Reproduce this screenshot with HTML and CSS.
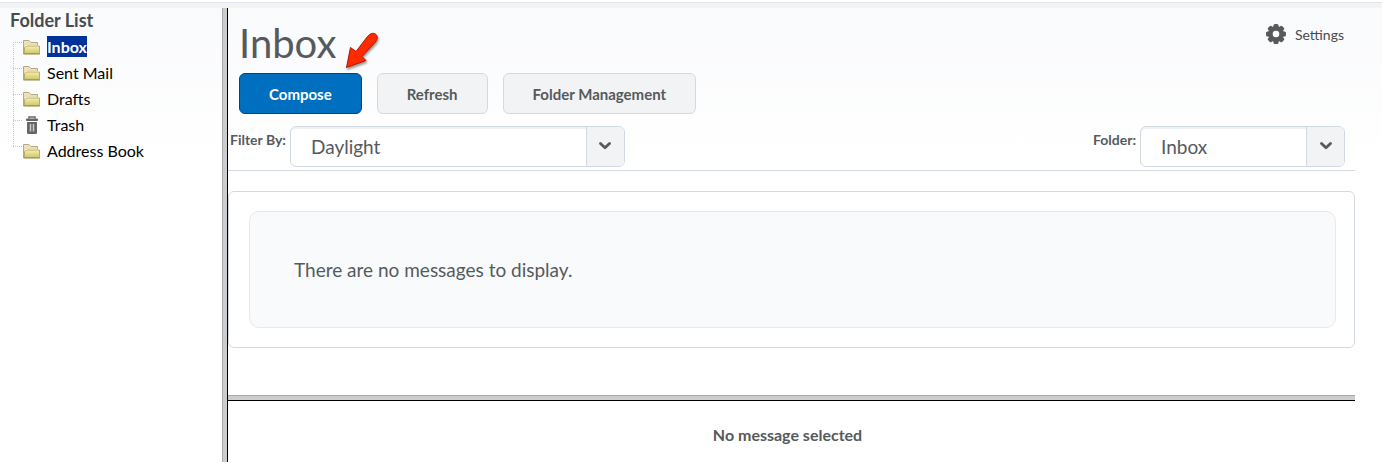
FILE: index.html
```html
<!DOCTYPE html>
<html lang="en">
<head>
    <meta charset="UTF-8">
    <meta name="viewport" content="width=device-width, initial-scale=1.0">
    <title>Inbox</title>
    <link rel="stylesheet" href="styles.css">
</head>
<body>
<!-- Shared icons -->
<svg class="defs" width="0" height="0" aria-hidden="true">
    <defs>
        <linearGradient id="folderFront" x1="0" y1="0" x2="0" y2="1">
            <stop offset="0" stop-color="#f3efb4"/>
            <stop offset="1" stop-color="#cfc766"/>
        </linearGradient>
        <linearGradient id="folderBack" x1="0" y1="0" x2="0" y2="1">
            <stop offset="0" stop-color="#f0e6c4"/>
            <stop offset="1" stop-color="#d8c88e"/>
        </linearGradient>
    </defs>
    <symbol id="folder" viewBox="0 0 18 16">
        <path d="M.5 15V1.500h5.500l2 2h6.500V8" fill="url(#folderBack)" stroke="#b3a887"/>
        <path d="M2.500 14V6.500h14V14" fill="none" stroke="#fffdf0"/>
        <path d="M1.500 14.500V9l2-2h13v7.500z" fill="url(#folderFront)" stroke="#b9ae62"/>
        <path d="M.5 15h16.500" fill="none" stroke="#8f8a55"/>
    </symbol>
    <symbol id="trash" viewBox="0 0 18 18">
        <path d="M6 2.500V1h6v1.500" fill="none" stroke="#666" stroke-width="1.500"/>
        <rect x="3" y="2.500" width="12" height="2.500" rx="1" fill="#666"/>
        <path d="M4 6h10v10.500q0 1.500-1.500 1.500h-7Q4 18 4 16.500z" fill="#666"/>
        <path d="M7.500 8v7.500M10.500 8v7.500" stroke="#ccc" stroke-width="1.500"/>
    </symbol>
    <symbol id="chevron" viewBox="0 0 12 8">
        <path d="M1.500 1.500L6 5.800l4.500-4.300" fill="none" stroke="#565a5c" stroke-width="2.800" stroke-linecap="round" stroke-linejoin="round"/>
    </symbol>
</svg>

<div class="topbar"></div>
<div class="frames">
    <nav class="sidebar">
        <h2>Folder List</h2>
        <ul class="folders">
            <li><svg width="18" height="16"><use href="#folder"/></svg><a href="#" class="selected">Inbox</a></li>
            <li><svg width="18" height="16"><use href="#folder"/></svg><a href="#">Sent Mail</a></li>
            <li><svg width="18" height="16"><use href="#folder"/></svg><a href="#">Drafts</a></li>
            <li><svg width="18" height="18"><use href="#trash"/></svg><a href="#">Trash</a></li>
            <li><svg width="18" height="16"><use href="#folder"/></svg><a href="#">Address Book</a></li>
        </ul>
    </nav>

    <main class="content">
        <section class="mail">
            <header class="header">
                <h1>Inbox
                    <svg class="pointer" width="40" height="46" viewBox="0 0 40 46" aria-hidden="true">
                        <path d="M4.500 40.500L8.500 20.500l5.500 4L25.500 9.500c3-3.500 6.500-4 8.500-2s1.500 5-1 8L20 29.500l4 4z" fill="#ff2a00" stroke="#b51600" stroke-linejoin="round"/>
                    </svg>
                </h1>
                <a href="#" class="settings">
                    <svg width="20" height="20" viewBox="0 0 20 20" aria-hidden="true">
                        <g fill="#565a5c">
                            <rect x="7.500" y="0" width="5" height="20" rx="1.500"/>
                            <rect x="7.500" y="0" width="5" height="20" rx="1.500" transform="rotate(45 10 10)"/>
                            <rect x="7.500" y="0" width="5" height="20" rx="1.500" transform="rotate(90 10 10)"/>
                            <rect x="7.500" y="0" width="5" height="20" rx="1.500" transform="rotate(135 10 10)"/>
                            <circle cx="10" cy="10" r="8"/>
                        </g>
                        <circle cx="10" cy="10" r="3.300" fill="#fafbfc"/>
                    </svg>
                    Settings
                </a>
            </header>

            <div class="actions">
                <button type="button" class="primary">Compose</button>
                <button type="button">Refresh</button>
                <button type="button">Folder Management</button>
            </div>

            <div class="filters">
                <div class="field">
                    <label for="filter">Filter By:</label>
                    <div class="dropdown wide">
                        <select id="filter"><option>Daylight</option></select>
                        <span class="arrow"><svg width="12" height="8"><use href="#chevron"/></svg></span>
                    </div>
                </div>
                <div class="field">
                    <label for="folderSelect">Folder:</label>
                    <div class="dropdown">
                        <select id="folderSelect"><option>Inbox</option></select>
                        <span class="arrow"><svg width="12" height="8"><use href="#chevron"/></svg></span>
                    </div>
                </div>
            </div>

            <div class="messages">
                <p class="empty">There are no messages to display.</p>
            </div>
        </section>

        <section class="preview">
            <p>No message selected</p>
        </section>
    </main>
</div>
</body>
</html>
```
FILE: styles.css
```css
* {
    box-sizing: border-box;
}

body {
    font-family: Lato, "Liberation Sans", sans-serif;
    margin: 0;
    min-height: 100vh;
    display: flex;
    flex-direction: column;
    background-color: #fff;
    color: #565a5c;
}

h1, h2, p, ul {
    margin: 0;
    padding: 0;
}

.defs {
    position: absolute;
}

.topbar {
    height: 8px;
    border-top: 2px solid #fff;
    background-color: #f3f4f6;
    box-shadow: inset 0 1px #e0e4ec;
}

.frames {
    flex: 1;
    display: flex;
    background: linear-gradient(#f9fafc, #fff 150px);
}

/* Folder tree */
.sidebar {
    width: 222px;
    padding-left: 10px;
}

.sidebar h2 {
    font-size: 18px;
    line-height: 24px;
    color: #494c4e;
}

.folders {
    list-style: none;
    padding: 1px 0 0 3px;
}

.folders li {
    display: flex;
    align-items: center;
    height: 26px;
    background:
        repeating-linear-gradient(#c8c8c0 0 1px, transparent 1px 2px) 0 0 / 1px 100% no-repeat,
        repeating-linear-gradient(90deg, #c8c8c0 0 1px, transparent 1px 2px) 0 9px / 10px 1px no-repeat;
    padding-left: 10px;
}

.folders li:first-child {
    background-position: 0 9px, 0 9px;
}

.folders li:last-child {
    background-size: 1px 9px, 10px 1px;
}

.folders a {
    margin-left: 6px;
    line-height: 21px;
    font-size: 16px;
    color: #000;
    text-decoration: none;
}

.folders a.selected {
    background-color: #039;
    color: #fff;
    font-weight: bold;
}

.folders svg {
    flex: none;
    margin-top: 2px;
}

/* Right side with the splitter on its left edge */
.content {
    flex: 1;
    display: flex;
    flex-direction: column;
    margin: 0 27px 0 5px;
    border-left: 1px solid #000;
    box-shadow: -4px 0 #ccc, -5px 0 #a9a9a9;
    clip-path: inset(0 0 0 -5px);
}

.header {
    display: flex;
    justify-content: space-between;
    padding: 11px 11px 6px;
}

h1 {
    position: relative;
    font-size: 40px;
    line-height: 48px;
    font-weight: normal;
}

.pointer {
    position: absolute;
    left: 103px;
    top: 8px;
    filter: drop-shadow(1px 2px 1px rgba(0, 0, 0, 0.4));
}

.settings {
    display: flex;
    align-items: center;
    gap: 9px;
    height: 30px;
    font-size: 14px;
    color: #494c4e;
    text-decoration: none;
}

.actions {
    display: flex;
    gap: 15px;
    padding: 0 11px;
}

button {
    height: 41px;
    padding: 0 29px;
    font-family: inherit;
    font-size: 15px;
    font-weight: bold;
    color: #565a5c;
    background-color: #f2f3f5;
    border: 1px solid #d3d9e3;
    border-radius: 6px;
    cursor: pointer;
}

button.primary {
    color: #fff;
    background-color: #006fbf;
    border-color: #004489;
}

.filters {
    display: flex;
    justify-content: space-between;
    padding: 12px 10px 3px 2px;
    border-bottom: 1px solid #d3d9e3;
}

.field {
    display: flex;
    gap: 4px;
}

label {
    font-size: 14px;
    font-weight: bold;
    line-height: 28px;
}

.dropdown {
    display: grid;
    grid-template-columns: 1fr 38px;
    width: 205px;
    height: 41px;
    border: 1px solid #d3d9e3;
    border-radius: 6px;
    background-color: #fff;
    box-shadow: inset 0 2px #f0f1f4;
    overflow: hidden;
}

.dropdown.wide {
    width: 335px;
}

select {
    grid-area: 1 / 1 / 2 / 3;
    appearance: none;
    border: none;
    background: none;
    padding: 0 20px;
    font-family: inherit;
    font-size: 19px;
    color: #565a5c;
}

.arrow {
    grid-area: 1 / 2;
    display: flex;
    align-items: center;
    justify-content: center;
    padding-bottom: 2px;
    background-color: #f2f3f5;
    border-left: 1px solid #d3d9e3;
    pointer-events: none;
}

.messages {
    margin: 20px 0 47px;
    padding: 19px 18px 19px 20px;
    border: 1px solid #d3d9e3;
    border-radius: 6px;
    background-color: #fff;
}

.empty {
    padding: 44px;
    font-size: 19px;
    line-height: 27px;
    background-color: #f9fafc;
    border: 1px solid #e6e9ee;
    border-radius: 10px;
}

/* Horizontal splitter above the preview */
.preview {
    flex: 1;
    border-top: 1px solid #a9a9a9;
    background: linear-gradient(#ccc 4px, #000 4px 5px, #fff 5px);
    padding: 27px 8px 0 0;
    text-align: center;
    font-size: 16px;
    line-height: 24px;
    font-weight: bold;
}
```
